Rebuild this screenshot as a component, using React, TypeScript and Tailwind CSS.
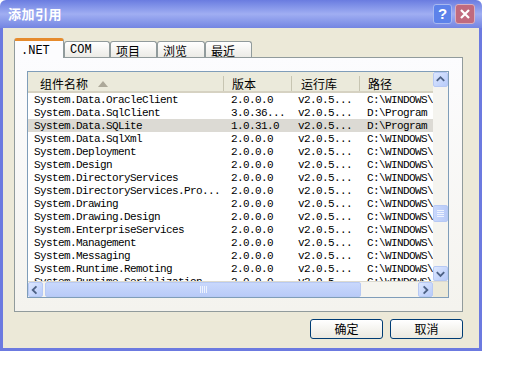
import React from "react";

const mono = { fontFamily: '"Liberation Mono", "Noto Sans CJK SC", monospace' };
const cjk = { fontFamily: '"Noto Sans CJK SC", "Liberation Sans", sans-serif' };

const rows = [
  ["System.Data.OracleClient", "2.0.0.0", "v2.0.5...", "C:\\WINDOWS\\"],
  ["System.Data.SqlClient", "3.0.36...", "v2.0.5...", "D:\\Program"],
  ["System.Data.SQLite", "1.0.31.0", "v2.0.5...", "D:\\Program"],
  ["System.Data.SqlXml", "2.0.0.0", "v2.0.5...", "C:\\WINDOWS\\"],
  ["System.Deployment", "2.0.0.0", "v2.0.5...", "C:\\WINDOWS\\"],
  ["System.Design", "2.0.0.0", "v2.0.5...", "C:\\WINDOWS\\"],
  ["System.DirectoryServices", "2.0.0.0", "v2.0.5...", "C:\\WINDOWS\\"],
  ["System.DirectoryServices.Pro...", "2.0.0.0", "v2.0.5...", "C:\\WINDOWS\\"],
  ["System.Drawing", "2.0.0.0", "v2.0.5...", "C:\\WINDOWS\\"],
  ["System.Drawing.Design", "2.0.0.0", "v2.0.5...", "C:\\WINDOWS\\"],
  ["System.EnterpriseServices", "2.0.0.0", "v2.0.5...", "C:\\WINDOWS\\"],
  ["System.Management", "2.0.0.0", "v2.0.5...", "C:\\WINDOWS\\"],
  ["System.Messaging", "2.0.0.0", "v2.0.5...", "C:\\WINDOWS\\"],
  ["System.Runtime.Remoting", "2.0.0.0", "v2.0.5...", "C:\\WINDOWS\\"],
  ["System.Runtime.Serialization", "2.0.0.0", "v2.0.5...", "C:\\WINDOWS\\"],
];

const tabs = [
  { label: ".NET", w: "w-[50px]", active: true },
  { label: "COM", w: "w-[46px]" },
  { label: "项目", w: "w-[47px]" },
  { label: "浏览", w: "w-[48px]" },
  { label: "最近", w: "w-[47px]" },
];

function Arrow({ dir }: { dir: "up" | "down" | "left" | "right" }) {
  const d = {
    up: "M3 8 L7 4 L11 8",
    down: "M3 5 L7 9 L11 5",
    left: "M8 3 L4 7 L8 11",
    right: "M5 3 L9 7 L5 11",
  }[dir];
  return (
    <div className="w-[15px] h-[15px] rounded-[2px] border border-[#b7c9f4] bg-gradient-to-br from-[#dde7fe] to-[#b7cbfa] flex items-center justify-center">
      <svg width="14" height="14" viewBox="0 0 14 14">
        <path d={d} fill="none" stroke="#4d6185" strokeWidth="2" />
      </svg>
    </div>
  );
}

function Button({ label }: { label: string }) {
  return (
    <div
      className="w-[73px] h-[20px] rounded-[3px] border border-[#003c74] bg-gradient-to-b from-white to-[#ebe9e0] flex items-center justify-center text-[12px] text-black"
      style={cjk}
    >
      {label}
    </div>
  );
}

export default function App() {
  return (
    <div className="w-[512px] h-[384px] bg-white">
      <div className="w-[482px] h-[351px] flex flex-col">
        {/* title bar */}
        <div className="h-[29px] rounded-t-[6px] bg-gradient-to-b from-[#6a7ce0] via-[#a0aef2] to-[#7485e2] flex items-center justify-between pl-[8px] pr-[7px]">
          <span className="text-white text-[13px] font-bold tracking-[0.5px]" style={cjk}>
            添加引用
          </span>
          <div className="flex gap-[3px] items-center">
            <div className="w-[19px] h-[20px] rounded-[3px] border border-[#a8b8f0] bg-[#5d82ea] flex items-center justify-center text-white text-[15px] font-bold" style={{ fontFamily: '"Liberation Sans", sans-serif' }}>
              ?
            </div>
            <div className="w-[20px] h-[20px] rounded-[3px] border border-[#d8b0c0] bg-[#c06a7e] flex items-center justify-center">
              <svg width="12" height="12" viewBox="0 0 12 12">
                <path d="M2 2 L10 10 M10 2 L2 10" stroke="white" strokeWidth="2.2" />
              </svg>
            </div>
          </div>
        </div>

        {/* body */}
        <div className="flex-1 flex flex-col border-x-[3px] border-b-[3px] border-[#6c7ae0] bg-[#ece9d8] pt-[10px] pl-[11px] pr-[16px] pb-[9px]">
          {/* tabs */}
          <div className="h-[19px] flex items-end relative z-10">
            {tabs.map((t) =>
              t.active ? (
                <div
                  key={t.label}
                  className={`${t.w} h-[20px] -mb-px bg-[#fcfcfe] border-x border-[#919b9c] border-t-[3px] border-t-[#e68b2c] rounded-t-[3px] pl-[6px] pt-[1px] text-[12px] text-black`}
                  style={mono}
                >
                  {t.label}
                </div>
              ) : (
                <div
                  key={t.label}
                  className={`${t.w} h-[16px] pt-[1px] bg-gradient-to-b from-white to-[#ecebe6] border border-b-0 border-[#919b9c] rounded-t-[3px] pl-[5px] text-[12px] leading-[15px] text-black`}
                  style={t.label === "COM" ? mono : cjk}
                >
                  {t.label}
                </div>
              )
            )}
          </div>

          {/* tab panel */}
          <div className="h-[255px] border border-[#919b9c] bg-gradient-to-b from-[#fcfcfe] to-[#f4f3ee] pt-[13px] pl-[12px] pr-[13px]">
            <div className="w-[422px] h-[227px] border border-[#7f9db9] bg-white flex flex-col">
              <div className="flex flex-1 min-h-0">
                {/* list area */}
                <div className="flex-1 min-w-0 flex flex-col overflow-hidden">
                  <div className="h-[21px] shrink-0 flex pt-[4px] bg-[#ebeadb] border-b-[2px] border-[#d6d2c2] text-[12px] text-black" style={cjk}>
                    <div className="w-[196px] shrink-0 flex items-center pl-[12px] border-r border-[#c7c5b2]">
                      组件名称
                      <svg className="ml-[10px]" width="10" height="6" viewBox="0 0 10 6">
                        <path d="M0 6 L5 0 L10 6 Z" fill="#aca899" />
                      </svg>
                    </div>
                    <div className="w-[68px] shrink-0 flex items-center pl-[8px] border-r border-[#c7c5b2]">版本</div>
                    <div className="w-[68px] shrink-0 flex items-center pl-[9px] border-r border-[#c7c5b2]">运行库</div>
                    <div className="flex-1 flex items-center pl-[8px]">路径</div>
                  </div>
                  <div className="flex-1 min-h-0 overflow-hidden">
                    {rows.map((r, i) => (
                      <div
                        key={i}
                        className={`h-[13px] pt-[2px] flex items-center text-[11px] tracking-[-0.6px] text-black whitespace-nowrap ${i === 2 ? "bg-[#dcdad4]" : ""}`}
                        style={mono}
                      >
                        <div className="w-[196px] shrink-0 pl-[6px] overflow-hidden">{r[0]}</div>
                        <div className="w-[68px] shrink-0 pl-[7px] overflow-hidden">{r[1]}</div>
                        <div className="w-[68px] shrink-0 pl-[6px] overflow-hidden">{r[2]}</div>
                        <div className="flex-1 pl-[7px] overflow-hidden">{r[3]}</div>
                      </div>
                    ))}
                  </div>
                </div>
                {/* vertical scrollbar */}
                <div className="w-[15px] shrink-0 bg-[#f5f4ef] flex flex-col">
                  <Arrow dir="up" />
                  <div className="h-[118px]" />
                  <div className="h-[17px] rounded-[2px] border border-[#b7c9f4] bg-gradient-to-r from-[#c9d8fc] to-[#b9cbf8] flex flex-col items-center justify-center gap-[1px]">
                    {[0, 1, 2, 3].map((k) => (
                      <div key={k} className="w-[7px] h-px bg-[#eef3fe]" />
                    ))}
                  </div>
                  <div className="flex-1" />
                  <Arrow dir="down" />
                </div>
              </div>
              {/* horizontal scrollbar */}
              <div className="h-[16px] shrink-0 flex bg-[#f5f4ef] border-t border-[#dcdad0]">
                <Arrow dir="left" />
                <div className="w-[316px] ml-[2px] h-[15px] rounded-[2px] border border-[#b7c9f4] bg-gradient-to-b from-[#c9d8fc] to-[#b9cbf8] flex items-center justify-center gap-[1px]">
                  {[0, 1, 2, 3].map((k) => (
                    <div key={k} className="w-px h-[7px] bg-[#eef3fe]" />
                  ))}
                </div>
                <div className="flex-1" />
                <Arrow dir="right" />
                <div className="w-[15px] bg-[#ece9d8]" />
              </div>
            </div>
          </div>

          {/* buttons */}
          <div className="mt-[7px] flex justify-end gap-[7px]">
            <Button label="确定" />
            <Button label="取消" />
          </div>
        </div>
      </div>
    </div>
  );
}
